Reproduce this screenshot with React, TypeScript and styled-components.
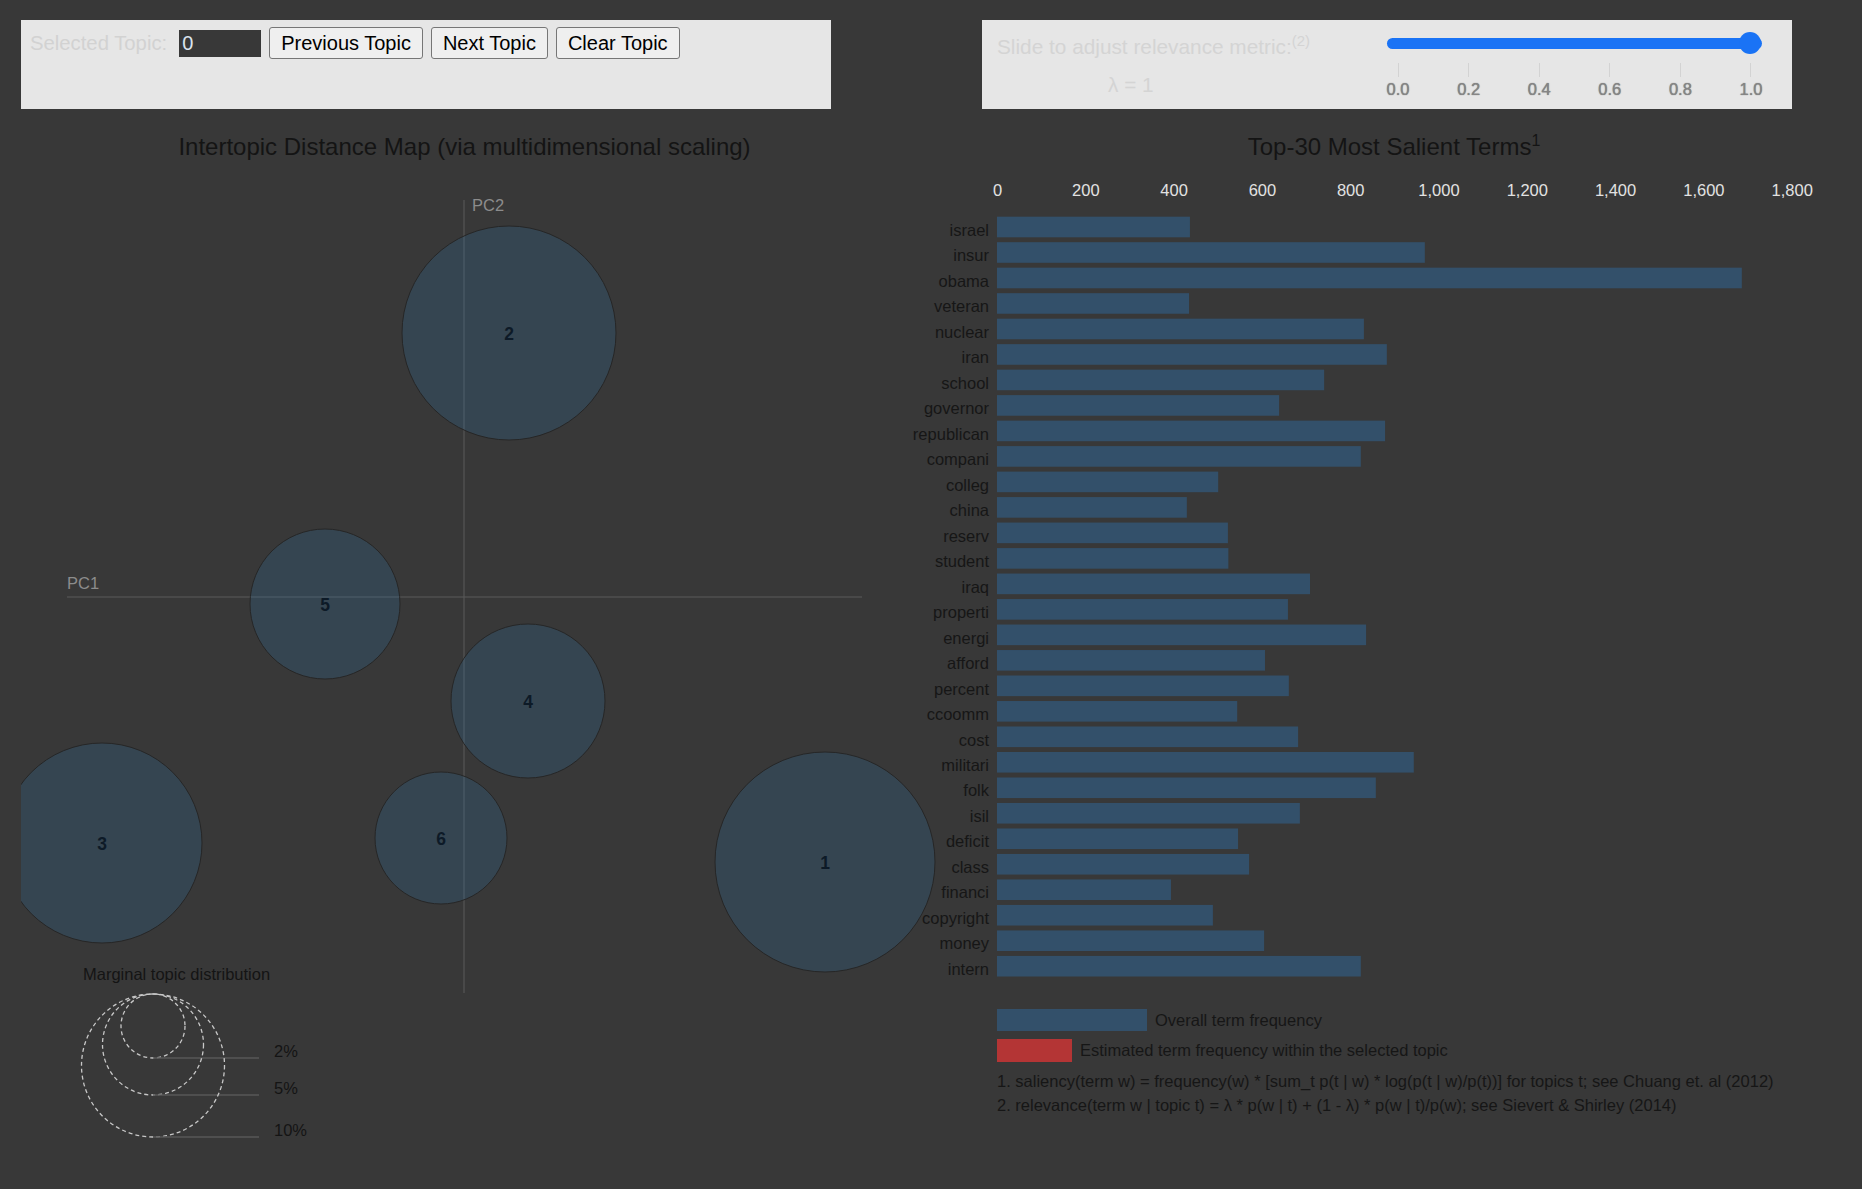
import React from "react";
import styled, { createGlobalStyle } from "styled-components";

const GlobalStyle = createGlobalStyle`
  body {
    margin: 0;
    background: #383838;
    font-family: "Liberation Sans", Arial, sans-serif;
  }
`;

const Page = styled.div`
  display: flex;
  gap: 151px;
  padding: 20px 0 0 21px;
  height: 1169px;
  overflow: hidden;
`;

const Column = styled.div`
  width: 810px;
  flex: none;
  display: flex;
  flex-direction: column;
`;

const Panel = styled.div`
  height: 89px;
  background: #e6e6e6;
  box-sizing: border-box;
  display: flex;
`;

const ControlRow = styled.div`
  display: flex;
  align-items: center;
  height: 32px;
  margin: 7px 0 0 9px;
`;

const FaintLabel = styled.span`
  color: #d2d2d2;
  font-size: 20.3px;
  margin-right: 12px;
`;

const TopicInput = styled.input`
  width: 82px;
  height: 27px;
  box-sizing: border-box;
  border: none;
  outline: none;
  background: #383838;
  color: #dbe4ee;
  font-family: "Liberation Sans", Arial, sans-serif;
  font-size: 20px;
  padding: 0 3px;
  margin-right: 8px;
`;

const TopicButton = styled.button`
  height: 32px;
  box-sizing: border-box;
  padding: 0 11px;
  margin-right: 8px;
  background: #efefef;
  border: 1px solid #767676;
  border-radius: 3px;
  color: #000;
  font-family: "Liberation Sans", Arial, sans-serif;
  font-size: 20px;
`;

const RelevanceText = styled.div`
  width: 386px;
  padding-left: 15px;
  flex: none;
  color: #d4d4d4;
  font-size: 20.8px;

  sup {
    font-size: 15px;
    line-height: 0;
  }
`;

const SlideLine = styled.div`
  margin-top: 14px;
  height: 26px;
  line-height: 26px;
`;

const LambdaLine = styled.div`
  margin-top: 12px;
  padding-left: 111px;
  line-height: 26px;
`;

const SliderCol = styled.div`
  position: relative;
  width: 383px;
  flex: none;
`;

const Track = styled.div`
  margin: 18px 4px 0;
  height: 11px;
  border-radius: 6px;
  background: #1a73f5;
`;

const Thumb = styled.div`
  position: absolute;
  left: 356px;
  top: 12px;
  width: 22px;
  height: 22px;
  border-radius: 50%;
  background: #1a73f5;
`;

const TickRow = styled.div`
  display: flex;
  justify-content: space-between;
  margin-top: 14px;
`;

const Tick = styled.div`
  width: 30px;
  display: flex;
  flex-direction: column;
  align-items: center;

  i {
    width: 1px;
    height: 14px;
    background: #d3d3d3;
  }

  span {
    margin-top: 3px;
    line-height: 19px;
    font-size: 16.5px;
    color: #858585;
    text-shadow: 0 0 1px #6a6a6a;
  }
`;

const MapSection = styled.div<{ $shift: number; $width: number }>`
  margin-left: ${(p) => p.$shift}px;
  width: ${(p) => p.$width}px;
`;

const Title = styled.div<{ $offset?: number }>`
  margin-top: 24px;
  padding-left: ${(p) => p.$offset ?? 0}px;
  height: 28px;
  line-height: 28px;
  text-align: center;
  font-size: 24px;
  color: #141414;

  sup {
    font-size: 16px;
    line-height: 0;
  }
`;

const Chart = styled.svg`
  display: block;
  overflow: visible;
  font-family: "Liberation Sans", Arial, sans-serif;
`;

const topics = [
  { id: 1, x: 758, y: 701, r: 110 },
  { id: 2, x: 442, y: 172, r: 107 },
  { id: 3, x: 35, y: 682, r: 100 },
  { id: 4, x: 461, y: 540, r: 77 },
  { id: 5, x: 258, y: 443, r: 75 },
  { id: 6, x: 374, y: 677, r: 66 },
];

const legend = [
  { label: "2%", r: 32, ty: 897 },
  { label: "5%", r: 50.5, ty: 934 },
  { label: "10%", r: 71.5, ty: 976 },
];

const terms: [string, number][] = [
  ["israel", 437],
  ["insur", 969],
  ["obama", 1687],
  ["veteran", 435],
  ["nuclear", 831],
  ["iran", 883],
  ["school", 741],
  ["governor", 639],
  ["republican", 879],
  ["compani", 824],
  ["colleg", 501],
  ["china", 430],
  ["reserv", 523],
  ["student", 524],
  ["iraq", 709],
  ["properti", 659],
  ["energi", 836],
  ["afford", 607],
  ["percent", 661],
  ["ccoomm", 544],
  ["cost", 682],
  ["militari", 944],
  ["folk", 858],
  ["isil", 686],
  ["deficit", 546],
  ["class", 571],
  ["financi", 394],
  ["copyright", 489],
  ["money", 605],
  ["intern", 824],
];

const X0 = 15;
const SCALE = 0.4415;
const ticks = [0, 200, 400, 600, 800, 1000, 1200, 1400, 1600, 1800];

const DistanceMap = () => (
  <Chart width={795} height={1000}>
    <defs>
      <clipPath id="mapclip">
        <rect x={-46} y={-40} width={1100} height={1100} />
      </clipPath>
    </defs>
    <g clipPath="url(#mapclip)">
      <line x1={397} y1={39} x2={397} y2={832} stroke="#5a5a5a" />
      <line x1={0} y1={436} x2={795} y2={436} stroke="#5a5a5a" />
      <text x={405} y={50} fontSize={16.5} fill="#8c8c8c">PC2</text>
      <text x={0} y={428} fontSize={16.5} fill="#8c8c8c">PC1</text>
      {topics.map((t) => (
        <g key={t.id}>
          <circle
            cx={t.x}
            cy={t.y}
            r={t.r}
            fill="#2a77ad"
            fillOpacity={0.21}
            stroke="#262626"
            strokeWidth={1}
          />
          <text
            x={t.x}
            y={t.y + 6.5}
            textAnchor="middle"
            fontSize={17.5}
            fontWeight="bold"
            fill="#0d1a27"
          >
            {t.id}
          </text>
        </g>
      ))}
      <text x={16} y={819} fontSize={16.5} fill="#141414">
        Marginal topic distribution
      </text>
      {legend.map((l) => (
        <g key={l.label}>
          <circle
            cx={86}
            cy={833 + l.r}
            r={l.r}
            fill="none"
            stroke="#c8c8c8"
            strokeWidth={1.3}
            strokeDasharray="4 3"
          />
          <line x1={86} y1={l.ty} x2={192} y2={l.ty} stroke="#575757" strokeWidth={1.5} />
          <text x={207} y={l.ty - 1} fontSize={16.5} fill="#141414">
            {l.label}
          </text>
        </g>
      ))}
    </g>
  </Chart>
);

const SalientBars = () => (
  <Chart width={810} height={1000}>
    {ticks.map((v) => (
      <text
        key={v}
        x={X0 + 0.5 + v * SCALE}
        y={35}
        textAnchor="middle"
        fontSize={16.5}
        fill="#e2e2e2"
      >
        {v.toLocaleString("en-US")}
      </text>
    ))}
    {terms.map(([term, value], i) => {
      const y = 55.7 + i * 25.49;
      return (
        <g key={term}>
          <rect x={X0} y={y} width={value * SCALE} height={20.6} fill="#33506a" />
          <text x={7} y={y + 19} textAnchor="end" fontSize={16.5} fill="#161616">
            {term}
          </text>
        </g>
      );
    })}
    <rect x={X0} y={848} width={150} height={22} fill="#33506a" />
    <text x={173} y={865} fontSize={16.5} fill="#161616">
      Overall term frequency
    </text>
    <rect x={X0} y={878} width={75} height={23} fill="#b43535" />
    <text x={98} y={895} fontSize={16.5} fill="#161616">
      Estimated term frequency within the selected topic
    </text>
    <text x={X0} y={926} fontSize={16.5} fill="#161616">
      1. saliency(term w) = frequency(w) * [sum_t p(t | w) * log(p(t | w)/p(t))] for topics t; see Chuang et. al (2012)
    </text>
    <text x={X0} y={950} fontSize={16.5} fill="#161616">
      2. relevance(term w | topic t) = λ * p(w | t) + (1 - λ) * p(w | t)/p(w); see Sievert &amp; Shirley (2014)
    </text>
  </Chart>
);

export default function App() {
  return (
    <>
      <GlobalStyle />
      <Page>
        <Column>
          <Panel>
            <ControlRow>
              <FaintLabel>Selected Topic:</FaintLabel>
              <TopicInput type="text" defaultValue="0" />
              <TopicButton>Previous Topic</TopicButton>
              <TopicButton>Next Topic</TopicButton>
              <TopicButton>Clear Topic</TopicButton>
            </ControlRow>
          </Panel>
          <MapSection $shift={46} $width={795}>
            <Title>Intertopic Distance Map (via multidimensional scaling)</Title>
            <DistanceMap />
          </MapSection>
        </Column>
        <Column>
          <Panel>
            <RelevanceText>
              <SlideLine>
                Slide to adjust relevance metric:<sup>(2)</sup>
              </SlideLine>
              <LambdaLine>λ = 1</LambdaLine>
            </RelevanceText>
            <SliderCol>
              <Track />
              <Thumb />
              <TickRow>
                {["0.0", "0.2", "0.4", "0.6", "0.8", "1.0"].map((t) => (
                  <Tick key={t}>
                    <i />
                    <span>{t}</span>
                  </Tick>
                ))}
              </TickRow>
            </SliderCol>
          </Panel>
          <Title $offset={14}>
            Top-30 Most Salient Terms<sup>1</sup>
          </Title>
          <SalientBars />
        </Column>
      </Page>
    </>
  );
}
